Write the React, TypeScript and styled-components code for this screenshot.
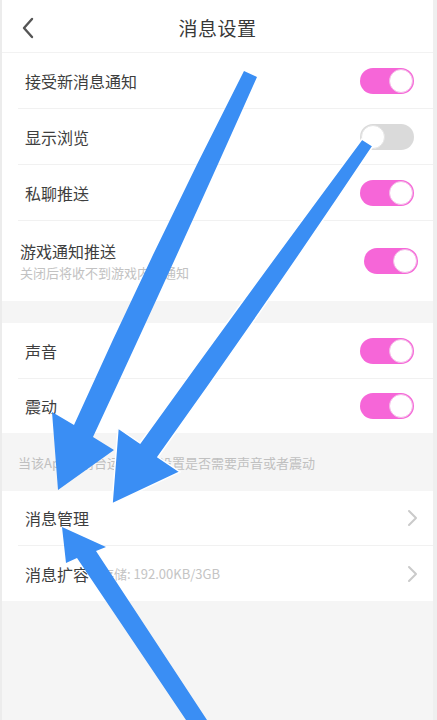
import React from "react";
import styled, {createGlobalStyle} from "styled-components";

const GlobalStyle = createGlobalStyle`
    html, body {
        margin: 0;
        padding: 0;
        background: #f5f5f5;
    }

    body {
        font-family: "Noto Sans CJK SC", "Noto Sans", sans-serif;
    }
`

type SwitchItem = {
    title: string
    on: boolean
}

const topSwitches: SwitchItem[] = [
    {title: "接受新消息通知", on: true},
    {title: "显示浏览", on: false},
    {title: "私聊推送", on: true},
]

const Toggle = ({on}: { on: boolean }) => (
    <Track $on={on}>
        <Knob $on={on}/>
    </Track>
)

const Chevron = () => (
    <svg width="12" height="18" viewBox="0 0 12 18">
        <polyline points="2,2 9,9 2,16" fill="none" stroke="#cacaca" strokeWidth="2" strokeLinecap="round"
                  strokeLinejoin="round"/>
    </svg>
)

const Arrows = () => (
    <Overlay width="437" height="720" viewBox="0 0 437 720">
        {/* from the 显示浏览 switch down to 消息管理 */}
        <path d="M362,139 L373,146 Q270,300 158,457 L180,472 L112,504 L118,428 L140,443 Q250,290 362,139 Z"
              fill="#3a8ef4" stroke="#fff" strokeWidth="1.5"/>
        {/* long one from the top */}
        <path d="M244,71 L257,77 Q180,250 93,437 L114,450 L58,490 L52,412 L74,425 Q155,245 244,71 Z"
              fill="#3a8ef4"/>
        {/* from the bottom, pointing up */}
        <path d="M207,720 L186,720 L77,558 L66,563 L62,527 L106,547 L96,551 Z" fill="#3a8ef4"/>
    </Overlay>
)

export default function App() {
    return (
        <>
            <GlobalStyle/>
            <Page>
                <Header>
                    <BackButton>
                        <svg width="14" height="24" viewBox="0 0 14 24">
                            <polyline points="11,3 3,12 11,21" fill="none" stroke="#555" strokeWidth="2.4"
                                      strokeLinecap="round" strokeLinejoin="round"/>
                        </svg>
                    </BackButton>
                    <Title>消息设置</Title>
                </Header>

                <Section>
                    {topSwitches.map(s => (
                        <Row key={s.title} $height={56}>
                            <Label>{s.title}</Label>
                            <Toggle on={s.on}/>
                        </Row>
                    ))}
                    <Row $height={80} $left={18} $right={15} $last>
                        <div>
                            <Label>游戏通知推送</Label>
                            <SubLabel>关闭后将收不到游戏内的通知</SubLabel>
                        </div>
                        <Toggle on/>
                    </Row>
                </Section>

                <Gap/>

                <Section>
                    <Row $height={56}>
                        <Label>声音</Label>
                        <Toggle on/>
                    </Row>
                    <Row $height={54} $last>
                        <Label>震动</Label>
                        <Toggle on/>
                    </Row>
                </Section>

                <Note>当该App在前台运行时，设置是否需要声音或者震动</Note>

                <Section>
                    <Row $height={55} $right={14}>
                        <Label>消息管理</Label>
                        <Chevron/>
                    </Row>
                    <Row $height={55} $right={14} $last>
                        <Inline>
                            <Label>消息扩容</Label>
                            <Extra>存储: 192.00KB/3GB</Extra>
                        </Inline>
                        <Chevron/>
                    </Row>
                </Section>

                <Arrows/>
            </Page>
        </>
    )
}

const Page = styled.div`
    position: relative;
    width: 437px;
    min-height: 720px;
    box-sizing: border-box;
    background: #f5f5f5;
    border-left: 2px solid #ececec;
    border-right: 4px solid #efefef;
    overflow: hidden;
`

const Header = styled.div`
    height: 53px;
    background: #fff;
    display: flex;
    align-items: center;
    justify-content: center;
    position: relative;
    border-bottom: 1px solid #f2f2f2;
    box-sizing: border-box;
`

const BackButton = styled.div`
    position: absolute;
    left: 19px;
    top: 16px;
    display: flex;
`

const Title = styled.div`
    font-size: 19px;
    color: #383838;
    letter-spacing: 0.5px;
    margin-top: 3px;
`

const Section = styled.div`
    background: #fff;
    padding-left: 16px;
`

const Row = styled.div<{ $height: number, $left?: number, $right?: number, $last?: boolean }>`
    height: ${p => p.$height}px;
    box-sizing: border-box;
    display: flex;
    align-items: center;
    justify-content: space-between;
    padding-left: ${p => (p.$left ?? 23) - 16}px;
    padding-right: ${p => p.$right ?? 19}px;
    border-bottom: ${p => p.$last ? "none" : "1px solid #f1f1f1"};
`

const Label = styled.div`
    font-size: 16px;
    line-height: 22px;
    color: #3e3e3e;
`

const SubLabel = styled.div`
    font-size: 13px;
    line-height: 18px;
    margin-top: 2px;
    color: #c2c2c2;
`

const Inline = styled.div`
    display: flex;
    align-items: center;
`

const Extra = styled.span`
    font-size: 13px;
    color: #c4c4c4;
    margin-left: 12px;
`

const Track = styled.div<{ $on: boolean }>`
    width: 54px;
    height: 26px;
    border-radius: 13px;
    background: ${p => p.$on ? "#f666d8" : "#dadada"};
    display: flex;
    align-items: center;
    justify-content: ${p => p.$on ? "flex-end" : "flex-start"};
    padding: 0 1px;
    box-sizing: border-box;
`

const Knob = styled.div<{ $on: boolean }>`
    width: 24px;
    height: 24px;
    border-radius: 50%;
    background: #fff;
    box-sizing: border-box;
    border: 1px solid ${p => p.$on ? "#f3b6e6" : "#e4e4e4"};
`

const Gap = styled.div`
    height: 22px;
`

const Note = styled.div`
    height: 58px;
    display: flex;
    align-items: center;
    padding-left: 16px;
    font-size: 13px;
    color: #c0c0c0;
`

const Overlay = styled.svg`
    position: absolute;
    top: 0;
    left: -2px;
    pointer-events: none;
`
